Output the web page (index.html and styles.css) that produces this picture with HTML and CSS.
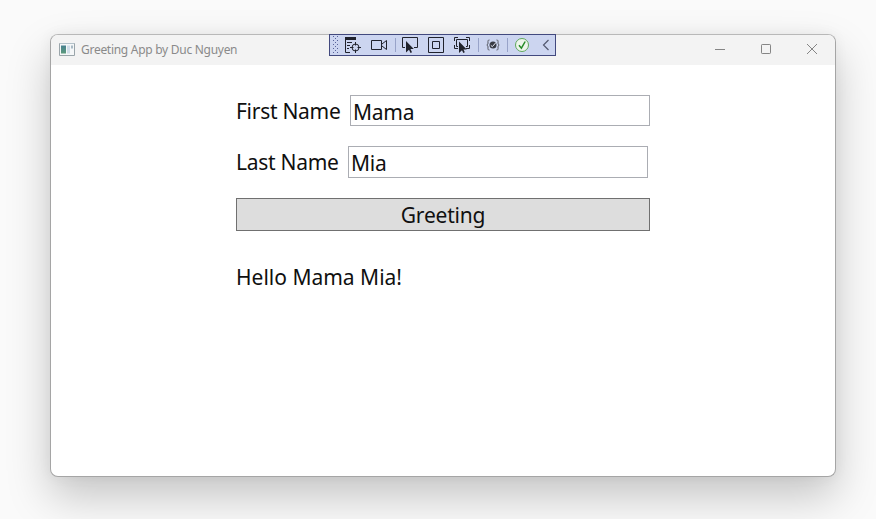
FILE: index.html
```
<!DOCTYPE html>
<html lang="en">
<head>
<meta charset="utf-8">
<title>Greeting App by Duc Nguyen</title>
<link rel="stylesheet" href="styles.css">
</head>
<body>
<main class="window">
  <header class="titlebar">
    <svg class="app-icon" width="16" height="14" viewBox="0 0 16 14">
      <defs><linearGradient id="pane" x2="0" y2="1"><stop stop-color="#467f8f"/><stop offset="1" stop-color="#5c9b7c"/></linearGradient></defs>
      <path d="M.5 1.500h15v12H.5z" fill="#f5f7f8" stroke="#9aa5aa"/>
      <path d="M1 1.500h14" stroke="#b4c2ca"/>
      <path d="M2 3.500h5v8H2z" fill="url(#pane)"/>
      <path d="M8 3.500h3v8H8z" fill="#cfdde8"/><path d="M12 3.500h2v3h-2z" fill="#a9bac4"/>
    </svg>
    <span class="title">Greeting App by Duc Nguyen</span>
    <div class="controls">
      <svg width="12" height="12" viewBox="0 0 12 12"><path d="M1 6.500h10"/></svg>
      <svg width="12" height="12" viewBox="0 0 12 12"><rect x="1.500" y="1.500" width="9" height="9" rx=".7"/></svg>
      <svg width="12" height="12" viewBox="0 0 12 12"><path d="M1 1l10 10M11 1L1 11"/></svg>
    </div>
  </header>

  <div class="toolbar">
    <svg class="grip" width="6" height="18" viewBox="0 0 6 18">
      <defs><pattern id="dots" width="4" height="4" patternUnits="userSpaceOnUse"><path d="M0 0h1v1H0zM2 2h1v1H2z" fill="#59639a" stroke="none"/></pattern></defs>
      <path d="M0 0h6v18H0z" fill="url(#dots)" stroke="none"/>
    </svg>
    <svg class="tree" width="16" height="18" viewBox="0 0 16 18">
      <path d="M0 1h11v3H0z" fill="#20222c" stroke="none"/>
      <path d="M.5 3v13.500H5M2 6.500h5M2 9.500h3M2 12.500h2"/>
      <circle cx="10.500" cy="11.500" r="3.500"/><path d="M10.500 6v3.500M10.500 13.500V17M5 11.500h3.500M12.500 11.500H16"/>
    </svg>
    <svg class="camera" width="16" height="18" viewBox="0 0 16 18"><path d="M.5 4.500h10v9H.5zM11 8l4.500-3.500v9L11 10"/></svg>
    <i class="sep"></i>
    <svg class="select" width="16" height="18" viewBox="0 0 16 18">
      <path d="M3 11.500H.5v-10h15v10H12"/><path d="M4 5v11.500l3-2.800 1.500 3.300 1.500-.7-1.500-3.300h3.300z" fill="#20222c" stroke="none"/>
    </svg>
    <svg class="bounds" width="16" height="18" viewBox="0 0 16 18"><path d="M.5 1.500h15v15H.5zM4.500 5.500h7v7h-7z"/></svg>
    <svg class="focus" width="16" height="18" viewBox="0 0 16 18">
      <path d="M.5 5V1.500H4M12 1.500h3.500V5M.5 9v3.500H4M12 12.500h3.500V9M4 10.500H2.500v-7h11v7H12"/><path d="M5 5.500V17l3-2.800L9.300 17l1.500-.7-1.300-2.800h3.300z" fill="#20222c" stroke="none"/>
    </svg>
    <i class="sep sep-mid"></i>
    <svg class="reload" width="14" height="18" viewBox="0 0 14 18">
      <path d="M3.500 4C1.500 4 2 5 2 7 2 8.500 1 9 .8 9 1 9 2 9.500 2 11c0 2-.5 3 1.500 3M10.500 4c2 0 1.500 1 1.500 3 0 1.500 1 2 1.200 2-.2 0-1.200.5-1.200 2 0 2 .5 3-1.500 3" stroke="#555762"/>
      <circle cx="7" cy="9" r="3.500" fill="#383a43" stroke="none"/><path d="M4.800 9.300l1.500 1.400L10 6.500" stroke="#e8ecf8"/>
    </svg>
    <i class="sep sep-end"></i>
    <svg class="status" width="16" height="18" viewBox="0 0 16 18">
      <circle cx="8" cy="9" r="6.500" fill="#edf5eb" stroke="#5fa85c"/><path d="M5 9.200l2.400 3L11.200 5.500" stroke="#258c27" stroke-width="1.500"/>
    </svg>
    <svg class="collapse" width="8" height="18" viewBox="0 0 8 18"><path d="M6.500 4L1.500 9l5 5" stroke="#535970" stroke-width="1.200"/></svg>
  </div>

  <form class="content">
    <div class="field first"><label for="first">First Name</label><input id="first" value="Mama"></div>
    <div class="field last"><label for="last">Last Name</label><input id="last" value="Mia"></div>
    <button type="button">Greeting</button>
    <output>Hello Mama Mia!</output>
  </form>
</main>
</body>
</html>
```
FILE: styles.css
```
* { box-sizing: border-box; }
body {
  margin: 0;
  height: 519px;
  padding: 34px 40px 0 50px;
  overflow: hidden;
  background: #fafafa;
  font-family: "Noto Sans", "Open Sans", sans-serif;
}
.window {
  position: relative;
  width: 786px;
  height: 443px;
  border: 1px solid #a5a5a5;
  border-top-color: #b8b8b8;
  border-radius: 8px;
  background: #fff;
  box-shadow: 0 20px 44px rgba(0, 0, 0, .21), 0 0 14px rgba(0, 0, 0, .05);
}
.titlebar {
  display: flex;
  align-items: center;
  height: 30px;
  padding: 0 17px 0 8px;
  border-radius: 7px 7px 0 0;
  background: #f3f3f3;
}
.app-icon { margin-top: -3px; }
.title {
  margin-left: 6px;
  color: #8a8a8a;
  font-size: 12px;
  letter-spacing: -.28px;
  line-height: 30px;
}
.controls { display: flex; gap: 34px; margin: -2px 0 0 auto; }
.controls svg { fill: none; stroke: #858585; }
.toolbar {
  position: absolute;
  top: -1px;
  left: 278px;
  display: flex;
  align-items: center;
  width: 227px;
  height: 22px;
  border: 1px solid #42497e;
  background: #ccd5f0;
}
.toolbar svg { flex: none; fill: none; stroke: #20222c; }
.grip { margin-left: 3px; }
.tree { margin-left: 6px; }
.camera { margin-left: 10px; }
.sep { width: 1px; height: 14px; margin-left: 8px; background: #98a3c9; }
.select { margin-left: 6px; }
.bounds, .focus { margin-left: 10px; }
.reload { margin-left: 7px; }
.sep-end { margin-left: 7px; }
.status { margin-left: 6px; }
.collapse { margin-left: 12px; }
.content {
  width: 414px;
  margin: 30px 0 0 185px;
  color: #101010;
  font-size: 21px;
}
.field { display: flex; align-items: center; height: 31px; }
.field label { width: 114px; white-space: nowrap; line-height: 31px; letter-spacing: -.28px; }
.first label { padding-top: 2px; }
.field input {
  width: 300px;
  height: 100%;
  padding: 2px 2px 0;
  border: 1px solid #abadb3;
  border-radius: 0;
  background: #fff;
  color: inherit;
  font: inherit;
  letter-spacing: -.25px;
}
.last { height: 32px; margin-top: 20px; }
.last label { width: 112px; }
button {
  display: block;
  width: 414px;
  height: 33px;
  margin-top: 20px;
  padding: 2px 0 0;
  border: 1px solid #707070;
  border-radius: 0;
  background: #ddd;
  color: inherit;
  font: inherit;
  letter-spacing: -.2px;
  line-height: 29px;
}
output { display: block; margin-top: 31px; line-height: 30px; }
```
